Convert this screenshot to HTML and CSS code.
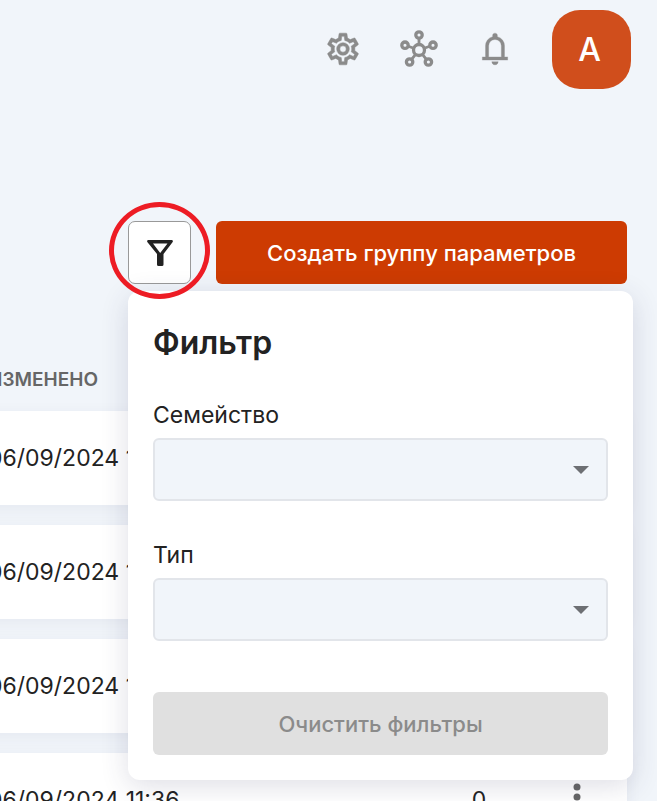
FILE: index.html
```
<!DOCTYPE html>
<html lang="ru">
<head>
  <meta charset="UTF-8">
  <meta name="viewport" content="width=device-width, initial-scale=1">
  <title>Группы параметров</title>
  <link rel="stylesheet" href="styles.css">
</head>
<body>
  <div class="app">
    <header class="topbar">
      <button class="icon-btn" aria-label="Настройки">
        <svg viewBox="0 0 24 24" fill="currentColor" stroke="currentColor" stroke-width=".3"><path d="M12 8a4 4 0 0 1 4 4 4 4 0 0 1-4 4 4 4 0 0 1-4-4 4 4 0 0 1 4-4m0 2a2 2 0 0 0-2 2 2 2 0 0 0 2 2 2 2 0 0 0 2-2 2 2 0 0 0-2-2M10 22C9.75 22 9.54 21.82 9.5 21.58L9.13 18.93C8.5 18.68 7.96 18.34 7.44 17.94L4.95 18.95C4.73 19.03 4.46 18.95 4.34 18.73L2.34 15.27C2.21 15.05 2.27 14.78 2.46 14.63L4.57 12.97L4.5 12L4.57 11L2.46 9.37C2.27 9.22 2.21 8.95 2.34 8.73L4.34 5.27C4.46 5.05 4.73 4.96 4.95 5.05L7.44 6.05C7.96 5.66 8.5 5.32 9.13 5.07L9.5 2.42C9.54 2.18 9.75 2 10 2H14C14.25 2 14.46 2.18 14.5 2.42L14.87 5.07C15.5 5.32 16.04 5.66 16.56 6.05L19.05 5.05C19.27 4.96 19.54 5.05 19.66 5.27L21.66 8.73C21.79 8.95 21.73 9.22 21.54 9.37L19.43 11L19.5 12L19.43 13L21.54 14.63C21.73 14.78 21.79 15.05 21.66 15.27L19.66 18.73C19.54 18.95 19.27 19.04 19.05 18.95L16.56 17.95C16.04 18.34 15.5 18.68 14.87 18.93L14.5 21.58C14.46 21.82 14.25 22 14 22H10M11.25 4L10.88 6.61C9.68 6.86 8.62 7.5 7.85 8.39L5.44 7.35L4.69 8.65L6.8 10.2C6.4 11.37 6.4 12.64 6.8 13.8L4.68 15.36L5.43 16.66L7.86 15.62C8.63 16.5 9.68 17.14 10.87 17.38L11.24 20H12.76L13.13 17.39C14.32 17.14 15.37 16.5 16.14 15.62L18.57 16.66L19.32 15.36L17.2 13.81C17.6 12.64 17.6 11.37 17.2 10.2L19.31 8.65L18.56 7.35L16.15 8.39C15.38 7.5 14.32 6.86 13.12 6.62L12.75 4H11.25Z"/></svg>
      </button>
      <button class="icon-btn" aria-label="Интеграции">
        <svg viewBox="0 0 38 38" fill="none" stroke="currentColor" stroke-width="3.3">
          <circle cx="19" cy="20" r="5.5"/>
          <circle cx="19" cy="5" r="3.2"/>
          <circle cx="5" cy="15.2" r="3.2"/>
          <circle cx="33" cy="15.2" r="3.2"/>
          <circle cx="9.6" cy="32" r="3.2"/>
          <circle cx="28.4" cy="32" r="3.2"/>
          <path stroke-width="2.8" d="M19 8.5v6M8.3 16.3l5.5 2M29.7 16.3l-5.5 2M11.8 29.2l3.6-4.6M26.2 29.2l-3.6-4.6"/>
        </svg>
      </button>
      <button class="icon-btn" aria-label="Уведомления">
        <svg viewBox="0 0 24 24" fill="currentColor" stroke="currentColor" stroke-width=".2"><path d="M4 19v-2h2v-7q0-2.075 1.25-3.687T10.5 4.2v-.7q0-.625.438-1.062T12 2t1.063.438T13.5 3.5v.7q2 .5 3.25 2.113T18 10v7h2v2zm8 3q-.825 0-1.412-.587T10 20h4q0 .825-.587 1.413T12 22m-4-5h8v-7q0-1.65-1.175-2.825T12 6 9.175 7.175 8 10z"/></svg>
      </button>
      <button class="avatar">A</button>
    </header>

    <main>
      <div class="toolbar">
        <div class="filter-wrap">
          <button class="filter-btn" aria-label="Фильтр">
            <svg viewBox="0 0 26 26" fill="currentColor" fill-rule="evenodd"><path d="M1 0H25Q26.5 .8 25.5 2.2L16.5 14V24.5Q16.5 26 15 26H11.500Q10 26 10 24.500V14L.5 2.200Q-.5 .8 1 0ZM6 3.500L13.200 13L20.500 3.500Z"/></svg>
          </button>
          <span class="highlight"></span>
        </div>
        <button class="create-btn">Создать группу параметров</button>

        <form class="filter-panel">
          <h2>Фильтр</h2>
          <label for="family">Семейство</label>
          <div class="select">
            <select id="family"><option></option></select>
          </div>
          <label for="type">Тип</label>
          <div class="select">
            <select id="type"><option></option></select>
          </div>
          <button type="reset" class="clear-btn" disabled>Очистить фильтры</button>
        </form>
      </div>

      <table class="groups">
        <thead>
          <tr><th>ИЗМЕНЕНО</th><th class="count"></th><th class="actions"></th></tr>
        </thead>
        <tbody>
          <tr>
            <td>06/09/2024 11:36</td>
            <td class="count">0</td>
            <td class="actions">
              <button class="more" aria-label="Действия">
                <svg viewBox="0 0 8 28" fill="currentColor"><circle cx="4" cy="4" r="3.5"/><circle cx="4" cy="14" r="3.5"/><circle cx="4" cy="24" r="3.5"/></svg>
              </button>
            </td>
          </tr>
          <tr>
            <td>06/09/2024 11:36</td>
            <td class="count">0</td>
            <td class="actions">
              <button class="more" aria-label="Действия">
                <svg viewBox="0 0 8 28" fill="currentColor"><circle cx="4" cy="4" r="3.5"/><circle cx="4" cy="14" r="3.5"/><circle cx="4" cy="24" r="3.5"/></svg>
              </button>
            </td>
          </tr>
          <tr>
            <td>06/09/2024 11:36</td>
            <td class="count">0</td>
            <td class="actions">
              <button class="more" aria-label="Действия">
                <svg viewBox="0 0 8 28" fill="currentColor"><circle cx="4" cy="4" r="3.5"/><circle cx="4" cy="14" r="3.5"/><circle cx="4" cy="24" r="3.5"/></svg>
              </button>
            </td>
          </tr>
          <tr>
            <td>06/09/2024 11:36</td>
            <td class="count">0</td>
            <td class="actions">
              <button class="more" aria-label="Действия">
                <svg viewBox="0 0 8 28" fill="currentColor"><circle cx="4" cy="4" r="3.5"/><circle cx="4" cy="14" r="3.5"/><circle cx="4" cy="24" r="3.5"/></svg>
              </button>
            </td>
          </tr>
        </tbody>
      </table>
    </main>
  </div>
</body>
</html>
```
FILE: styles.css
```
* {
  box-sizing: border-box;
}

body {
  margin: 0;
  background: #f1f5fa;
  color: #222;
  font-family: Inter, "Liberation Sans", sans-serif;
  font-size: 23px;
}

button, select {
  font-family: inherit;
  font-size: 22px;
  cursor: pointer;
}

.app {
  height: 100vh;
  overflow: hidden;
}

/* top bar */
.topbar {
  display: flex;
  justify-content: flex-end;
  align-items: center;
  gap: 38px;
  padding: 10px 26px;
}

.icon-btn {
  width: 38px;
  height: 38px;
  padding: 0;
  border: none;
  background: none;
  color: #8b8b8b;
}

.icon-btn svg {
  display: block;
  width: 100%;
  margin-top: -1px;
}

.avatar {
  width: 79px;
  height: 79px;
  padding: 0 4px 0 0;
  border: none;
  border-radius: 28px;
  background: #d04e1c;
  color: #fff;
  font-size: 32px;
  font-weight: 500;
}

/* toolbar */
.toolbar {
  position: relative;
  display: flex;
  justify-content: flex-end;
  gap: 25px;
  margin-top: 122px;
  padding-right: 30px;
}

.filter-wrap {
  position: relative;
}

.filter-btn {
  display: flex;
  align-items: center;
  justify-content: center;
  width: 63px;
  height: 63px;
  border: 1px solid #999;
  border-radius: 7px;
  background: #fff;
  color: #222;
}

.filter-btn svg {
  flex: none;
  width: 26px;
}

.highlight {
  position: absolute;
  z-index: 3;
  inset: -19px -19px -15px;
  border: 5px solid #ed1c24;
  border-radius: 50%;
  pointer-events: none;
}

.create-btn {
  height: 63px;
  padding: 0 51px;
  border: none;
  border-radius: 6px;
  background: #cd3b02;
  color: #fff;
  font-weight: 500;
}

/* filter popover */
.filter-panel {
  position: absolute;
  z-index: 2;
  top: calc(100% + 7px);
  right: 24px;
  width: 505px;
  padding: 32px 25px 25px;
  border-radius: 12px;
  background: #fff;
  box-shadow: 0 6px 28px rgba(50, 50, 93, 0.16);
}

.filter-panel h2 {
  margin: 0 0 36px;
  font-size: 32px;
  line-height: 40px;
  font-weight: 600;
}

.filter-panel label {
  display: block;
  margin-bottom: 7px;
  line-height: 32px;
}

.select {
  position: relative;
  margin-bottom: 38px;
}

.select::after {
  content: "";
  position: absolute;
  top: 28px;
  right: 19px;
  border: 8px solid transparent;
  border-top-color: #6d6f73;
  border-bottom: none;
  pointer-events: none;
}

.select select {
  display: block;
  appearance: none;
  width: 100%;
  height: 63px;
  padding: 0 50px 0 16px;
  border: 2px solid #e2e5ea;
  border-radius: 6px;
  background: #f1f5fa;
}

.clear-btn {
  width: 100%;
  height: 63px;
  margin-top: 13px;
  border: none;
  border-radius: 6px;
  background: #e0e0e0;
  color: #8b8b8b;
  font-weight: 500;
}

/* table, its left part runs off the screen */
.groups {
  width: calc(100% + 6px);
  margin: 65px 30px 0 -36px;
  border-spacing: 0 20px;
}

.groups th {
  height: 22px;
  padding: 0 24px;
  color: #666;
  font-size: 19px;
  line-height: 22px;
  font-weight: 600;
  text-align: left;
}

.groups td {
  height: 94px;
  padding: 0 24px;
  background: #fff;
}

.groups tbody tr {
  box-shadow: 0 4px 16px rgba(50, 50, 93, 0.06);
}

.groups .count {
  width: 96px;
  text-align: center;
}

.groups .actions {
  width: 100px;
  text-align: center;
}

.more {
  padding: 0;
  border: none;
  background: none;
  color: #666;
}

.more svg {
  display: block;
  width: 8px;
}
```
